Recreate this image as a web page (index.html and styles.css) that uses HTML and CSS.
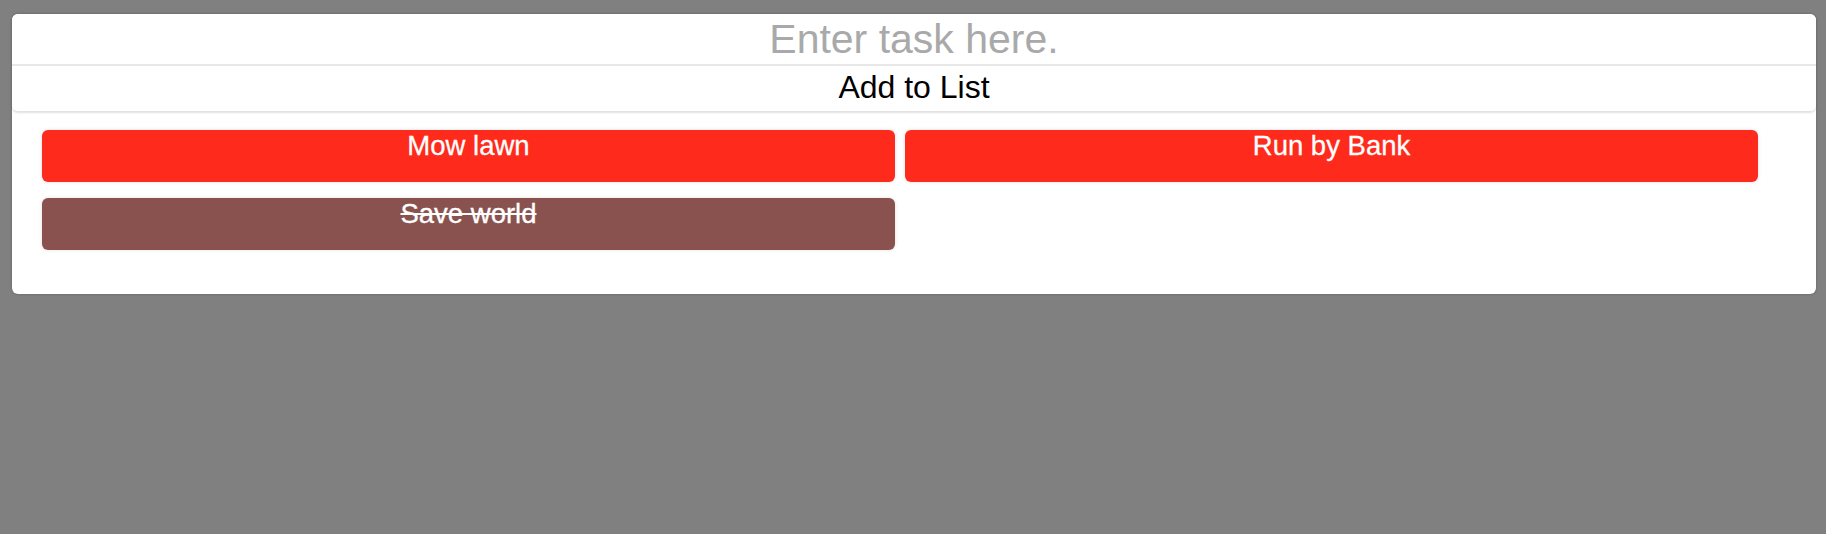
FILE: index.html
```html
<!DOCTYPE html>
<html>
<head>
<meta charset="utf-8">
<link rel="stylesheet" href="styles.css">
</head>
<body>
<div class="card">
  <div class="entry">
    <input class="task-input" type="text" placeholder="Enter task here.">
    <button class="add-btn">Add to List</button>
  </div>
  <div class="list">
    <div class="item">Mow lawn</div>
    <div class="item">Run by Bank</div>
    <div class="item done"><span>Save world</span></div>
  </div>
</div>
</body>
</html>
```
FILE: styles.css
```css
html, body {
  margin: 0;
  padding: 0;
  background: #808080;
  font-family: "Liberation Sans", Arial, sans-serif;
}
body {
  padding: 14px 10px 0 12px;
  min-height: 534px;
  box-sizing: border-box;
}
.card {
  background: #fff;
  border-radius: 6px;
  box-shadow: 0 0 3px rgba(0,0,0,0.25);
  height: 280px;
  box-sizing: border-box;
}
.entry {
  display: flex;
  flex-direction: column;
  border-radius: 6px;
  box-shadow: 0 1px 2px rgba(0,0,0,0.12);
  border-bottom: 1px solid #e2e2e2;
}
.task-input {
  box-sizing: border-box;
  height: 52px;
  border: none;
  border-bottom: 2px solid #e8e8e8;
  border-radius: 6px 6px 0 0;
  font-family: "Liberation Sans", Arial, sans-serif;
  font-size: 41px;
  text-align: center;
  padding: 0;
  margin: 0;
  outline: none;
  color: #000;
  background: #fff;
}
.task-input::placeholder {
  color: #a9a9a9;
}
.add-btn {
  box-sizing: border-box;
  height: 45px;
  border: none;
  background: #fff;
  border-radius: 0 0 6px 6px;
  font-family: "Liberation Sans", Arial, sans-serif;
  font-size: 32px;
  color: #000;
  padding: 0 0 4px 0;
  margin: 0;
  line-height: 36px;
}
.list {
  display: grid;
  grid-template-columns: 1fr 1fr;
  column-gap: 10px;
  row-gap: 16px;
  padding: 18px 58px 0 30px;
}
.item {
  height: 52px;
  border-radius: 6px;
  background: #fe2a1c;
  color: #fff;
  font-size: 27.5px;
  text-align: center;
  line-height: 31px;
  box-shadow: 0 0 4px rgba(0,0,0,0.12);
  -webkit-text-stroke: 0.3px #fff;
}
.item.done {
  background: #89524f;
}
.item.done span {
  text-decoration: line-through;
}
```
